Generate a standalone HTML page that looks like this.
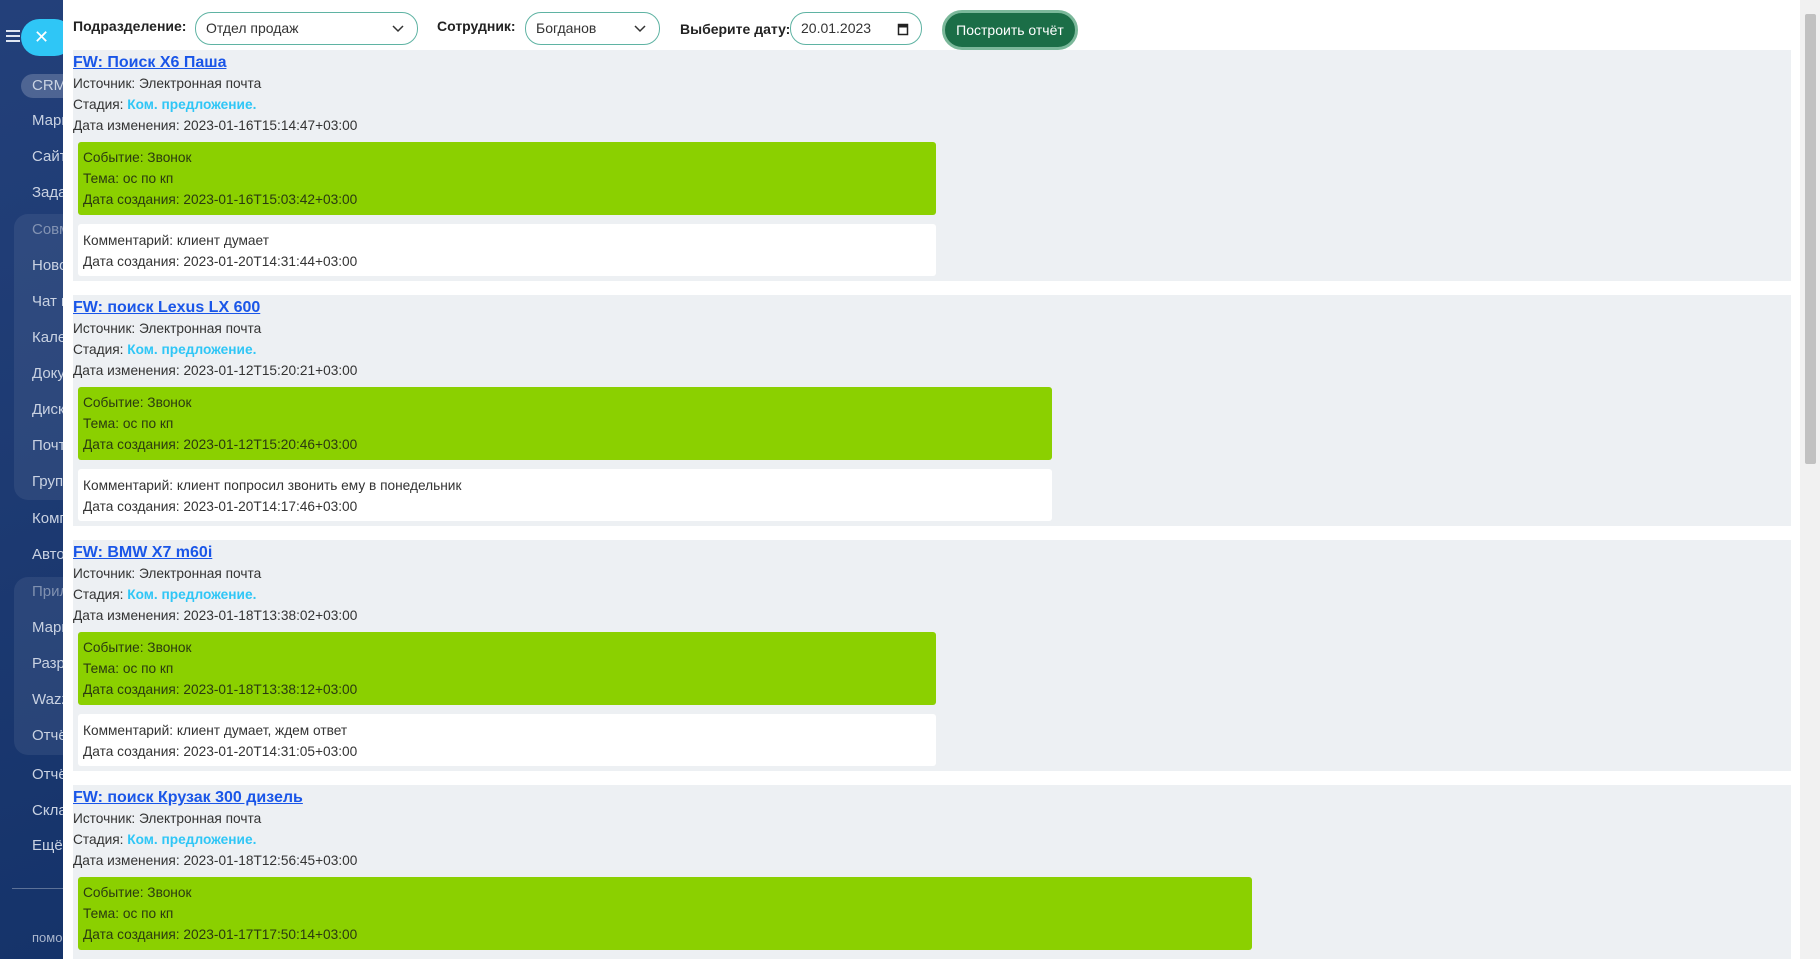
<!DOCTYPE html>
<html><head><meta charset="utf-8">
<style>
*{box-sizing:border-box}
html,body{margin:0;width:1820px;height:959px;overflow:hidden}
body{background:#fff;font-family:"Liberation Sans",sans-serif;font-size:13.7px;color:#333;position:relative}
#sb{position:absolute;left:0;top:0;width:63px;height:959px;background:linear-gradient(160deg,#23407a 0%,#1d3a72 50%,#15336a 100%);overflow:hidden}
#sb .it{position:absolute;left:32px;color:#c9d2e2;font-size:15px;white-space:nowrap;line-height:20px}
#sb .grp{position:absolute;left:14px;width:80px;background:rgba(255,255,255,.07);border-radius:14px}
#sb .h{color:rgba(255,255,255,.4)}
#close{position:absolute;left:21px;top:19px;width:52px;height:37px;border-radius:19px;background:#2fc6f6;color:#fff;font-size:18px;line-height:37px;padding-left:13px}
#hdr{position:absolute;left:63px;top:0;width:1737px;height:50px}
.lbl{position:absolute;top:18px;font-weight:bold;font-size:14px;color:#222}
.sel{position:absolute;top:12px;height:33px;border:1px solid #5fb3a3;border-radius:16px;padding:0 10px;line-height:31px;font-size:14px;color:#333;background:#fff}
.chev{position:absolute;right:12px;top:9px}
#btn{position:absolute;top:10px;width:136px;height:40px;border-radius:20px;background:#1b6e47;border:3px solid #7bb89a;color:#fff;font-size:14px;line-height:34px;text-align:center}
.card{position:absolute;left:73px;width:1718px;background:#edf0f3;padding:2px 0 0 0;overflow:hidden}
.card p{margin:0;line-height:21px;white-space:nowrap}
.t{font-weight:bold;font-size:16px;color:#1a56e8;text-decoration:underline}
.st{color:#2fc6f6;font-weight:bold}
.g{margin:6px 0 0 5px;background:#8bd000;border-radius:3px;padding:5px 5px 5px 5px;color:#2a3a10}
.w{margin:9px 0 0 5px;background:#fff;border-radius:3px;padding:6px 5px 4px 5px}
#scr{position:absolute;right:0;top:0;width:20px;height:959px;background:#f1f1f1}
#scr div{position:absolute;left:5px;top:14px;width:11px;height:450px;background:#c1c1c1;border-radius:2px}
</style></head><body>
<div id="sb">
<div style="position:absolute;left:6px;top:30px;width:14px;height:2px;background:#dfe6f2;box-shadow:0 5px 0 #dfe6f2,0 10px 0 #dfe6f2"></div>
<div id="close">✕</div>
<div style="position:absolute;left:21px;top:74px;width:60px;height:24px;border-radius:12px;background:rgba(255,255,255,.2)"></div>
<div class="it" style="top:76px;color:#c9d3e3">CRM</div>
<div class="grp" style="top:214px;height:286px"></div>
<div class="grp" style="top:577px;height:178px"></div>
<div class="it" style="top:111px">Маркетинг</div>
<div class="it" style="top:147px">Сайты</div>
<div class="it" style="top:183px">Задачи</div>
<div class="it h" style="top:220px">Совместная</div>
<div class="it" style="top:256px">Новости</div>
<div class="it" style="top:292px">Чат и</div>
<div class="it" style="top:328px">Календарь</div>
<div class="it" style="top:364px">Документы</div>
<div class="it" style="top:400px">Диск</div>
<div class="it" style="top:436px">Почта</div>
<div class="it" style="top:472px">Группы</div>
<div class="it" style="top:509px">Компания</div>
<div class="it" style="top:545px">Автоматизация</div>
<div class="it h" style="top:582px">Приложения</div>
<div class="it" style="top:618px">Маркет</div>
<div class="it" style="top:654px">Разработчикам</div>
<div class="it" style="top:690px">Wazzup</div>
<div class="it" style="top:726px">Отчёты</div>
<div class="it" style="top:765px">Отчёты</div>
<div class="it" style="top:801px">Склад</div>
<div class="it" style="top:836px">Ещё</div>
<div style="position:absolute;left:12px;top:888px;width:60px;height:1px;background:rgba(255,255,255,.3)"></div>
<div class="it" style="top:928px;font-size:13px;color:#aab6cc">помощь</div>
</div>
<div id="hdr">
<div class="lbl" style="left:10px">Подразделение:</div>
<div class="sel" style="left:132px;width:223px">Отдел продаж<svg class="chev" width="14" height="14" viewBox="0 0 14 14"><path d="M2 4l5 5 5-5" fill="none" stroke="#333" stroke-width="1.5"/></svg></div>
<div class="lbl" style="left:374px">Сотрудник:</div>
<div class="sel" style="left:462px;width:135px">Богданов<svg class="chev" width="14" height="14" viewBox="0 0 14 14"><path d="M2 4l5 5 5-5" fill="none" stroke="#333" stroke-width="1.5"/></svg></div>
<div class="lbl" style="left:617px;top:21px">Выберите дату:</div>
<div class="sel" style="left:727px;width:132px">20.01.2023<svg class="chev" width="12" height="14" viewBox="0 0 12 14"><rect x="1.5" y="2.5" width="9" height="10" fill="none" stroke="#222" stroke-width="1.5"/><rect x="1.5" y="2.5" width="9" height="3" fill="#222"/></svg></div>
<div id="btn" style="left:879px">Построить отчёт</div>
</div>

<div class="card" style="top:50px;height:231px">
<p class="t">FW: Поиск X6 Паша</p>
<p>Источник: Электронная почта</p>
<p>Стадия: <span class="st">Ком. предложение.</span></p>
<p>Дата изменения: 2023-01-16T15:14:47+03:00</p>
<div class="g" style="width:858px"><p>Событие: Звонок</p><p>Тема: ос по кп</p><p>Дата создания: 2023-01-16T15:03:42+03:00</p></div>
<div class="w" style="width:858px"><p>Комментарий: клиент думает</p><p>Дата создания: 2023-01-20T14:31:44+03:00</p></div>
</div>

<div class="card" style="top:295px;height:231px">
<p class="t">FW: поиск Lexus LX 600</p>
<p>Источник: Электронная почта</p>
<p>Стадия: <span class="st">Ком. предложение.</span></p>
<p>Дата изменения: 2023-01-12T15:20:21+03:00</p>
<div class="g" style="width:974px"><p>Событие: Звонок</p><p>Тема: ос по кп</p><p>Дата создания: 2023-01-12T15:20:46+03:00</p></div>
<div class="w" style="width:974px"><p>Комментарий: клиент попросил звонить ему в понедельник</p><p>Дата создания: 2023-01-20T14:17:46+03:00</p></div>
</div>

<div class="card" style="top:540px;height:231px">
<p class="t">FW: BMW X7 m60i</p>
<p>Источник: Электронная почта</p>
<p>Стадия: <span class="st">Ком. предложение.</span></p>
<p>Дата изменения: 2023-01-18T13:38:02+03:00</p>
<div class="g" style="width:858px"><p>Событие: Звонок</p><p>Тема: ос по кп</p><p>Дата создания: 2023-01-18T13:38:12+03:00</p></div>
<div class="w" style="width:858px"><p>Комментарий: клиент думает, ждем ответ</p><p>Дата создания: 2023-01-20T14:31:05+03:00</p></div>
</div>

<div class="card" style="top:785px;height:174px">
<p class="t">FW: поиск Крузак 300 дизель</p>
<p>Источник: Электронная почта</p>
<p>Стадия: <span class="st">Ком. предложение.</span></p>
<p>Дата изменения: 2023-01-18T12:56:45+03:00</p>
<div class="g" style="width:1174px"><p>Событие: Звонок</p><p>Тема: ос по кп</p><p>Дата создания: 2023-01-17T17:50:14+03:00</p></div>
</div>

<div id="scr"><div></div></div>
</body></html>
